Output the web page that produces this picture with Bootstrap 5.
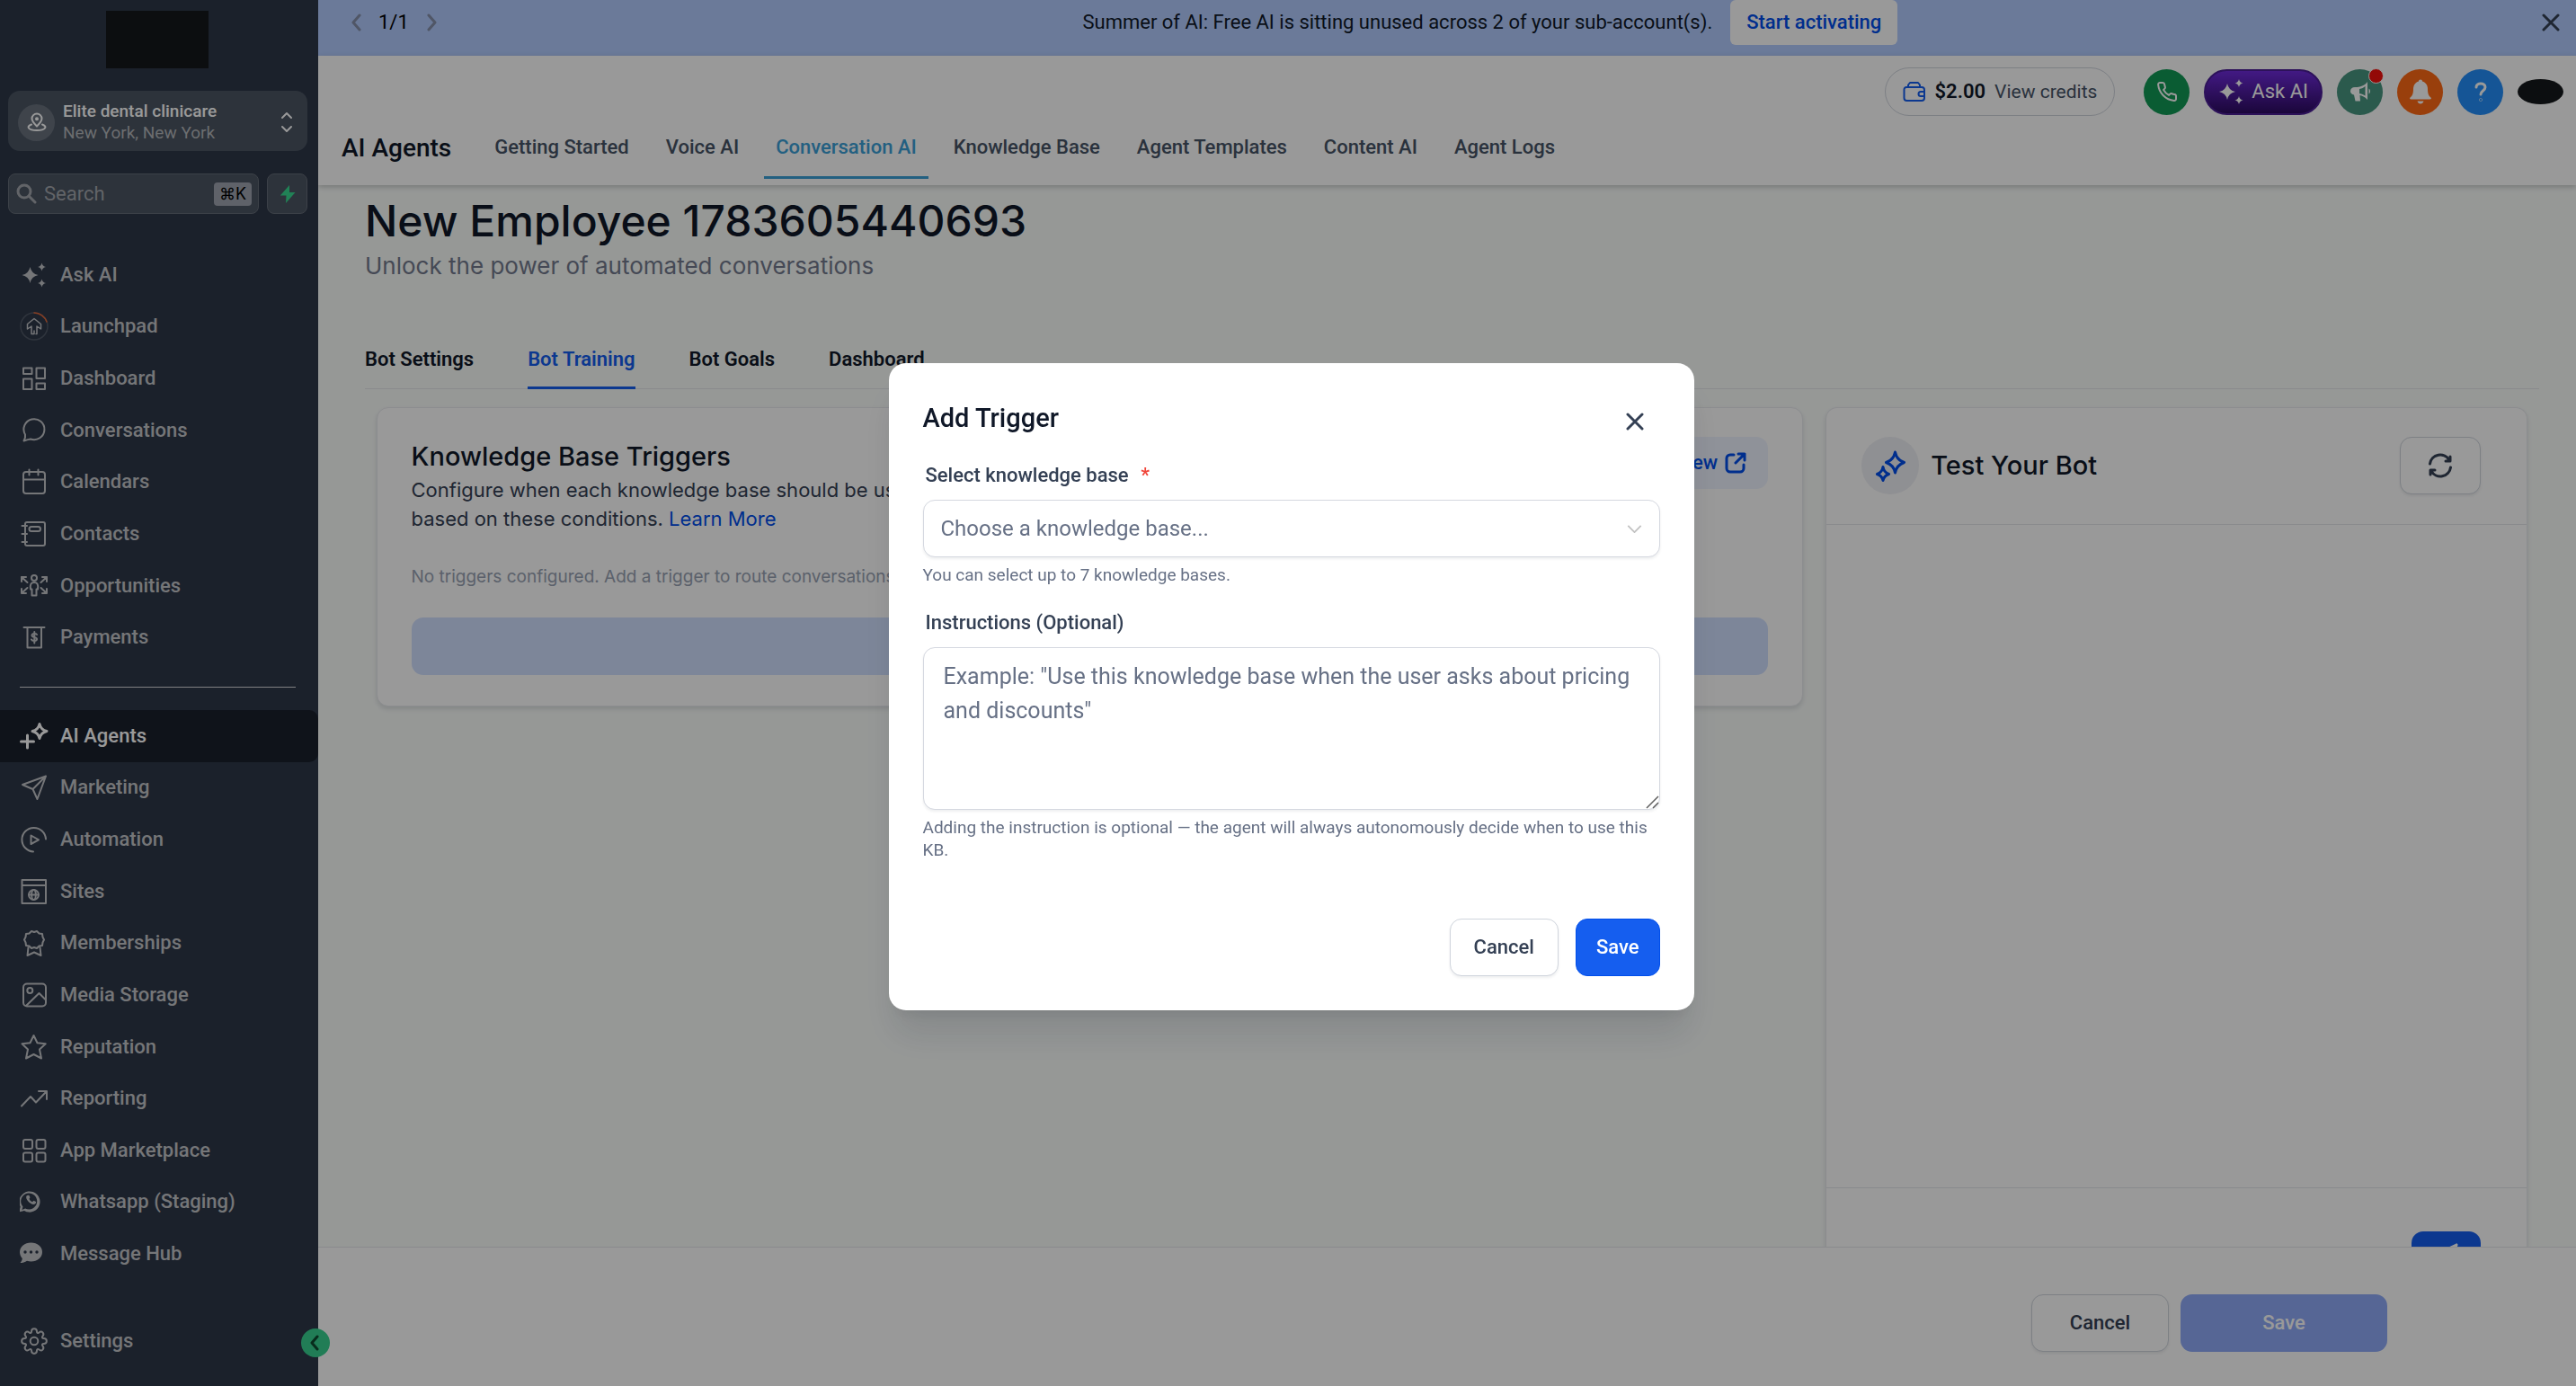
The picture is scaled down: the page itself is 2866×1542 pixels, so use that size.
<!DOCTYPE html>
<html lang="en">
<head>
<meta charset="utf-8">
<meta name="viewport" content="width=device-width, initial-scale=1">
<title>AI Agents – Conversation AI</title>
<link rel="stylesheet" href="https://cdn.jsdelivr.net/npm/bootstrap@5.3.0/dist/css/bootstrap.min.css">
<style>
  :root { --ink:#101828; --slate:#344054; --muted:#667085; --line:#d0d5dd; --blue:#155eef; --side:#2d3748; --side-text:#c3c5c9; }
  body { font-family: Roboto, "Liberation Sans", sans-serif; font-size: 22px; line-height: 32px; color: var(--ink); background: #fff; }
  .inter { font-family: Inter, Roboto, sans-serif; }
  .app-shell { height: 100vh; }
  svg { display: block; flex: none; }
  a { text-decoration: none; }
  .stroke { fill: none; stroke: currentColor; stroke-width: 2; stroke-linecap: round; stroke-linejoin: round; }
  .heavy { stroke-width: 3; }

  /* sidebar */
  .side { width: 354px; flex: none; background: var(--side); color: var(--side-text); }
  .brand-mark { width: 114px; height: 64px; background: #15181b; margin: 12px 0 25px 118px; }
  .acct { margin: 0 12px 25px 9px; height: 67px; padding: 3px 15px 0 11px; gap: 9px; border: 0; border-radius: 13px; background: #4b5563; color: #fff; text-align: left; font-size: 19px; line-height: 24px; }
  .acct-name { font-weight: 500; }
  .acct-pin { width: 41px; height: 41px; background: #69727e; }
  .acct-place { color: #b4b7bb; }
  .search-row { margin: 0 12px 39px 9px; gap: 9px; height: 45px; }
  .search-field { border: 1px solid #656d78; border-radius: 8px; background: #4b5563; padding: 0 7px 0 8px; gap: 8px; color: #a3a7ad; }
  .search-field input { background: none; border: 0; outline: 0; width: 100%; min-width: 0; padding: 0; color: #fff; }
  .search-field input::placeholder { color: #a3a7ad; }
  .kbd-hint { background: #9ea4af; color: #000; border-radius: 4px; padding: 0 6px; font: 18px/26px Inter, "DejaVu Sans", sans-serif; white-space: nowrap; }
  .bolt-btn { width: 45px; flex: none; border: 1px solid #656d78; border-radius: 8px; background: #4b5563; color: #38d88f; padding: 0; }
  .nav-top { flex: 8 1 0; }
  .nav-more { flex: 11 1 0; }
  .side-link { flex: 1 1 0; min-height: 0; padding-left: 22px; gap: 13px; color: var(--side-text); font-weight: 500; border-radius: 0 10px 10px 0; }
  .side-link.active { background: #1a202c; color: #fff; }
  .side-rule { height: 1px; margin: 26px 25px 25px 22px; background: #d5d7da; }
  .side-foot { height: 118px; padding: 39px 0 22px; }
  .fold-btn { position: absolute; right: -13px; bottom: 32px; width: 32px; height: 32px; border: 0; padding: 0; background: #38d090; color: #0e4a30; }

  /* banner and header */
  .promo { height: 62px; padding: 0 18px 12px 34px; background: #b2ccff; overflow: hidden; }
  .promo button { border: 0; background: none; padding: 0; }
  .promo .cta { background: #fff; color: #004eeb; font-weight: 500; height: 50px; padding: 0 18px; border-radius: 6px; margin-left: 20px; }
  .pager { color: #8590ab; gap: 17px; }
  .head { height: 144px; background: #fff; box-shadow: 0 2px 6px rgba(0,0,0,.22); position: relative; z-index: 1; }
  .head-tools { padding: 13px 14px 0 0; gap: 16px; }
  .credits { height: 54px; border: 1px solid var(--line); border-radius: 27px; padding: 0 19px 0 19px; gap: 10px; color: #475467; background: #fff; margin-right: 16px; font-size: 21px; }
  .credits b { font-weight: 600; color: var(--ink); font-size: 22px; }
  .round-btn { width: 51px; height: 51px; border: 0; padding: 0; color: #fff; position: relative; }
  .ask-btn { height: 51px; border: 2px solid #4b1e96; border-radius: 26px; background: linear-gradient(#6f2bdc, #2d0b62); color: #fff; padding: 0 14px; gap: 9px; }
  .red-dot { position: absolute; top: -1px; right: -1px; width: 17px; height: 17px; background: #f5100c; border: 1px solid #fff; }
  .me { width: 51px; height: 28px; border-radius: 50%; background: #15181b; }
  .head-nav { padding: 2px 0 0 26px; }
  .head-nav h1 { font-size: 28px; line-height: 40px; font-weight: 500; margin: 0 35px 0 0; }
  .top-tab { color: #475467; font-weight: 500; padding: 13px 13px 16px; margin-right: 15px; border-bottom: 3px solid transparent; }
  .top-tab.active { color: #3ba0d8; border-color: #3ba0d8; }

  /* page */
  .page { background: #fafdfb; padding: 12px 41px 0 52px; overflow: hidden; min-height: 0; }
  .page h2 { font-size: 48px; line-height: 56px; font-weight: 500; margin: 0; }
  .page .sub { font-size: 26px; line-height: 44px; color: #737b8e; margin: 0 0 49px; }
  .bot-tabs { border-bottom: 1px solid #e4e7ec; gap: 60px; margin-bottom: 20px; height: 66px; }
  .bot-tabs a { color: var(--ink); font-weight: 600; border-bottom: 3px solid transparent; padding-top: 17px; height: 66px; }
  .bot-tabs a.active { color: var(--blue); border-color: var(--blue); }
  .panels { --bs-gutter-x: 25px; margin: 0; min-height: 0; }
  .panel { background: #fff; border: 1px solid #e9ebef; border-radius: 13px; box-shadow: 0 3px 5px rgba(16,24,40,.12); }
  .panel h3 { font-size: 29px; line-height: 40px; font-weight: 500; margin: 0; }
  .kb { padding: 32px 38px 34px; }
  .kb h3 { line-height: 43px; }
  .kb p { margin: 0; color: var(--slate); }
  .kb a { color: #004eeb; }
  .kb .none-yet { font-size: 19px; line-height: 26px; color: #98a2b3; margin: 36px 0 32px; }
  .add-btn { height: 64px; border: 0; border-radius: 13px; background: #d1e0ff; color: #fff; font-weight: 500; }
  .preview-btn { height: 58px; border: 0; border-radius: 13px; background: #eff4ff; color: #004eeb; padding: 0 24px; gap: 8px; font-weight: 500; }
  .tester { border-bottom: 0; border-radius: 13px 13px 0 0; }
  .tester-head { height: 130px; padding: 0 51px 2px 39px; border-bottom: 1px solid #e4e7ec; }
  .orb { width: 64px; height: 64px; background: #eff0f5; color: #004eeb; margin-right: 13px; }
  .line-btn { height: 64px; border: 1px solid var(--line); border-radius: 13px; background: #fff; color: var(--slate); font-weight: 500; box-shadow: 0 2px 3px rgba(16,24,40,.07); }
  .refresh { width: 90px; padding: 0; }
  .tester-foot { height: 66px; border-top: 1px solid #e4e7ec; padding: 48px 51px 0; }
  .send { width: 77px; height: 64px; border: 0; border-radius: 13px; background: var(--blue); color: #fff; }
  .send svg { overflow: visible; }
  .actions { height: 155px; background: #fff; border-top: 1px solid #e4e7ec; padding: 52px 210px 0 0; gap: 13px; }
  .actions .line-btn { width: 153px; }
  .save-off { width: 230px; height: 64px; border: 0; border-radius: 13px; background: #8fabf8; color: #fff; font-weight: 500; }

  /* dialog */
  .modal-backdrop.show { opacity: .4; }
  .modal { padding: 0 0 14px 7px; }
  .modal-dialog { max-width: 896px; }
  .modal-content { border: 0; border-radius: 19px; padding: 38px; box-shadow: 0 32px 38px -6px rgba(16,24,40,.12), 0 12px 13px -6px rgba(16,24,40,.06); }
  .modal-title { font-size: 29px; line-height: 46px; font-weight: 500; }
  .x-btn { border: 0; background: none; padding: 0; width: 36px; height: 36px; margin: 9px 10px 0 0; color: var(--slate); }
  .field-label { font-weight: 500; color: var(--slate); margin: 0 0 10px 3px; line-height: 34px; display: block; }
  .pick, .note { border: 1px solid #d5d8e0; border-radius: 13px; color: var(--muted); box-shadow: 0 2px 3px rgba(16,24,40,.07); }
  .pick { height: 64px; font-size: 24px; padding: 0 60px 0 19px; background: #fff url("data:image/svg+xml,%3Csvg xmlns='http://www.w3.org/2000/svg' viewBox='0 0 18 10'%3E%3Cpath d='M1 1l8 8 8-8' fill='none' stroke='%23c2c2c2' stroke-width='2'/%3E%3C/svg%3E") no-repeat right 19px center / 17px 9px; }
  .note { height: 181px; font-size: 25px; padding: 13px 22px; line-height: 38px; }
  .note::placeholder { color: var(--muted); opacity: 1; }
  .note::-webkit-resizer { background: url("data:image/svg+xml,%3Csvg xmlns='http://www.w3.org/2000/svg' viewBox='0 0 15 15'%3E%3Cpath d='M1 14L14 1M8 14l6-6' stroke='%23606060' stroke-width='1.500'/%3E%3C/svg%3E") no-repeat right bottom / 15px 15px; }
  .hint { font-size: 19px; line-height: 25px; color: var(--muted); margin: 7px 0 0; }
  .modal-content .line-btn { padding: 0 26px; }
  .go-btn { height: 64px; padding: 0 22px; border: 1px solid #004eeb; border-radius: 13px; background: var(--blue); color: #fff; font-weight: 500; }
</style>
<script src="https://cdn.jsdelivr.net/npm/bootstrap@5.3.0/dist/js/bootstrap.bundle.min.js"></script>
</head>
<body class="modal-open overflow-hidden">
<div class="app-shell d-flex">

  <aside class="side d-flex flex-column position-relative">
    <div class="brand-mark"></div>
    <button type="button" class="acct d-flex align-items-center">
      <span class="acct-pin rounded-circle d-flex align-items-center justify-content-center"><svg class="stroke" width="22" height="22" viewBox="0 0 22 22"><path d="M11 15.5C8 12.500 5.500 10 5.500 7a5.500 5.500 0 0 1 11 0c0 3-2.500 5.500-5.500 8.500z"/><circle cx="11" cy="7.200" r="1"/><path d="M5 13.500c-6 2-4 6.500 6 6.500s12-4.500 6-6.500"/></svg></span>
      <span class="flex-fill"><span class="d-block acct-name">Elite dental clinicare</span><span class="d-block acct-place">New York, New York</span></span>
      <svg class="stroke" width="16" height="26" viewBox="0 0 16 26"><path d="M3 8l5-5 5 5M3 18l5 5 5-5"/></svg>
    </button>
    <div class="search-row d-flex">
      <label class="search-field d-flex align-items-center flex-fill">
        <svg class="stroke heavy" width="23" height="23" viewBox="0 0 23 23"><circle cx="9" cy="9" r="7"/><path d="M14.500 14.500l6.500 6.500"/></svg>
        <input type="text" placeholder="Search" aria-label="Search"><span class="kbd-hint">⌘K</span>
      </label>
      <button type="button" class="bolt-btn d-flex align-items-center justify-content-center" aria-label="Quick actions"><svg width="18" height="20" viewBox="0 0 18 20" fill="currentColor"><path d="M11 0L.800 11.500H7.500L7 20 17.500 8H11z"/></svg></button>
    </div>

    <nav class="nav-top d-flex flex-column">
      <a href="#" class="side-link d-flex align-items-center"><svg width="32" height="32" viewBox="0 0 32 32" fill="currentColor"><path d="M11.500 7q1.500 7.500 9 9-7.500 1.500-9 9-1.500-7.500-9-9 7.500-1.500 9-9zM24.500 2.500q.8 3.700 4.500 4.500-3.700.8-4.500 4.500-.8-3.700-4.500-4.500 3.700-.8 4.500-4.500zM24.500 20.500q.8 3.700 4.500 4.500-3.700.8-4.500 4.500-.8-3.700-4.500-4.500 3.700-.8 4.500-4.500z"/></svg>Ask AI</a>
      <a href="#" class="side-link d-flex align-items-center"><svg class="stroke" width="32" height="32" viewBox="0 0 32 32"><g stroke-width="1.500"><circle cx="16" cy="16" r="15" stroke="#4f5866"/><path d="M16 1a15 15 0 0 1 14 10" stroke="#e0683a"/><path d="M13 24.500V16l-4.500 3v-5.500L16 7.500l7.500 6V19L19 16v8.500h-1M13 24.500h3V21"/></g></svg>Launchpad</a>
      <a href="#" class="side-link d-flex align-items-center"><svg class="stroke" width="32" height="32" viewBox="0 0 32 32"><path d="M4 4.500h9.500V11H4zM4 16.500h9.500V28H4zM18.500 4.500H28V16h-9.500zM18.500 21.500H28V28h-9.500z"/></svg>Dashboard</a>
      <a href="#" class="side-link d-flex align-items-center"><svg class="stroke" width="32" height="32" viewBox="0 0 32 32"><path d="M4.500 27.500c1.500-3 2-4.800 1.500-7A11.500 11.500 0 1 1 12 25.500c-2 .2-4 .8-7.500 2z"/></svg>Conversations</a>
      <a href="#" class="side-link d-flex align-items-center"><svg class="stroke" width="32" height="32" viewBox="0 0 32 32"><rect x="4" y="5" width="24" height="24" rx="3"/><path d="M4 13.500h24M10.500 2.500v6M20.500 2.500v6"/></svg>Calendars</a>
      <a href="#" class="side-link d-flex align-items-center"><svg class="stroke" width="32" height="32" viewBox="0 0 32 32"><rect x="6" y="3" width="22" height="26" rx="2"/><path d="M2.500 7h5.500M2.500 16h5.500M2.500 25h5.500"/><rect x="10.500" y="8" width="12.500" height="5" rx="2.500"/></svg>Contacts</a>
      <a href="#" class="side-link d-flex align-items-center"><svg class="stroke" width="32" height="32" viewBox="0 0 32 32"><circle cx="16" cy="7" r="3"/><path d="M13.500 26.500v-7H12c-1-6 1-7.500 4-7.500s5 1.500 4 7.500h-1.500v7z"/><path d="M2 11V6h5M2 6l6.500 6M30 11V6h-5M30 6l-6.500 6M2 19v5h5M2 24l6.500-6M30 19v5h-5M30 24l-6.500-6"/></svg>Opportunities</a>
      <a href="#" class="side-link d-flex align-items-center"><svg class="stroke" width="32" height="32" viewBox="0 0 32 32"><path d="M4.500 5h23M8.500 5v22.500h15.500V5M19 13c-1-1.500-5.500-1.500-5.500 1s5.500 1.500 5.500 4-5 2.500-6 .500M16.300 10v12.500"/></svg>Payments</a>
    </nav>
    <div class="side-rule"></div>
    <nav class="nav-more d-flex flex-column">
      <a href="#" class="side-link active d-flex align-items-center"><svg class="stroke heavy" width="32" height="32" viewBox="0 0 32 32"><path d="M22 2.500q1.500 6.500 8 8-6.500 1.500-8 8-1.500-6.500-8-8 6.500-1.500 8-8zM8.500 15v14M1.500 22h14"/></svg>AI Agents</a>
      <a href="#" class="side-link d-flex align-items-center"><svg class="stroke" width="32" height="32" viewBox="0 0 32 32"><path d="M29 3.500L3 13l11.500 5L19.500 29zM29 3.500L14.500 18"/></svg>Marketing</a>
      <a href="#" class="side-link d-flex align-items-center"><svg class="stroke" width="32" height="32" viewBox="0 0 32 32"><path d="M29 15.500A13.300 13.300 0 1 0 15 29.500M12.500 11.500l8.500 4.800-8.500 4.700z"/></svg>Automation</a>
      <a href="#" class="side-link d-flex align-items-center"><svg class="stroke" width="32" height="32" viewBox="0 0 32 32"><path d="M2.500 3h26.500v26H2.500zM2.500 9h26.500"/><circle cx="15.500" cy="19.500" r="5.500"/><ellipse cx="15.500" cy="19.500" rx="2.300" ry="5.500"/><path d="M10 19.500h11"/></svg>Sites</a>
      <a href="#" class="side-link d-flex align-items-center"><svg class="stroke" width="32" height="32" viewBox="0 0 32 32"><path d="M13 3l3 1 3-1 2.500 2.500 3.500.500.500 3.500 1.500 3-1.500 3-.500 3.500-3.500.500L19 22l-3-1-3 1-2.500-2.500L7 19l-.5-3.500L5 12.500l1.500-3L7 6l3.500-.500zM9.500 21L8.500 30l7.500-3.500L23.500 30l-1-9"/></svg>Memberships</a>
      <a href="#" class="side-link d-flex align-items-center"><svg class="stroke" width="32" height="32" viewBox="0 0 32 32"><rect x="4" y="3.500" width="25" height="25" rx="4"/><circle cx="11.300" cy="11" r="3"/><path d="M7 28L21.500 14 29 21.500"/></svg>Media Storage</a>
      <a href="#" class="side-link d-flex align-items-center"><svg class="stroke" width="32" height="32" viewBox="0 0 32 32"><path d="M15.500 3l4 8.300 9.200 1-6.700 6.200L24 28.500l-8.500-4.500L7 28.500l2-10L2.500 12.300l9-1z"/></svg>Reputation</a>
      <a href="#" class="side-link d-flex align-items-center"><svg class="stroke" width="32" height="32" viewBox="0 0 32 32"><path d="M2 24.500l10-10.500 6 6.500L29.500 8.500M21 8h9v9"/></svg>Reporting</a>
      <a href="#" class="side-link d-flex align-items-center"><svg class="stroke" width="32" height="32" viewBox="0 0 32 32"><rect x="4" y="4" width="10" height="10" rx="2"/><rect x="18.500" y="4" width="10" height="10" rx="2"/><rect x="4" y="18.500" width="10" height="10" rx="2"/><rect x="18.500" y="18.500" width="10" height="10" rx="2"/></svg>App Marketplace</a>
      <a href="#" class="side-link d-flex align-items-center"><svg width="32" height="32" viewBox="0 0 32 32"><path fill="currentColor" fill-rule="evenodd" d="M-1 27.500l1.700-6A11.600 11.600 0 1 1 5 26zM10.500 24.500a9 9 0 1 0-7-3l-1 3.500 3.600-1.500a9 9 0 0 0 4.400 1z"/><path d="M7.500 9.500c-2 3 4.500 10.500 9 9.300 1.700-.8 1.700-2.300 1.500-2.800l-2.500-1.200-1.500 1.400c-2-.8-3-2-3.500-3.500l1-1.500-1.200-2.400c-1.300-.3-2.200 0-2.800.7z" fill="currentColor"/></svg>Whatsapp (Staging)</a>
      <a href="#" class="side-link d-flex align-items-center"><svg width="32" height="32" viewBox="0 0 32 32"><path d="M12.500 3.500c7 0 12.500 4.500 12.500 10.500s-5.500 10.500-12.500 10.500c-1.500 0-3-.3-4.500-.8-2 1.600-5 2.300-7.500 2.300 1.500-1.500 2.300-3.500 2.300-5C1 19 0 16.500 0 14 0 8 5.500 3.500 12.500 3.500z" fill="currentColor"/><g fill="#2d3748"><circle cx="6" cy="14" r="1.700"/><circle cx="12.500" cy="14" r="1.700"/><circle cx="19" cy="14" r="1.700"/></g></svg>Message Hub</a>
    </nav>
    <div class="side-foot d-flex flex-column">
      <a href="#" class="side-link d-flex align-items-center"><svg class="stroke" width="32" height="32" viewBox="0 0 32 32"><path d="M13 5.500C13 1 19 1 19 5.500c0 1.500 1 2 2.200 1.200C24.500 3.800 28 7.500 25.300 10.800c-.8 1.200-.3 2.200 1.200 2.200 4.500 0 4.500 6 0 6-1.500 0-2 1-1.200 2.200 2.700 3.300-.8 7-4.100 4.100C20 24.500 19 25 19 26.500c0 4.500-6 4.500-6 0 0-1.500-1-2-2.200-1.200-3.300 2.900-6.800-.8-4.100-4.100C7.500 20 7 19 5.500 19 1 19 1 13 5.500 13 7 13 7.500 12 6.700 10.800 4 7.500 7.500 3.800 10.800 6.700 12 7.500 13 7 13 5.500z"/><circle cx="16" cy="16" r="4.300"/></svg>Settings</a>
    </div>
    <button type="button" class="fold-btn rounded-circle d-flex align-items-center justify-content-center" aria-label="Collapse sidebar"><svg class="stroke heavy" width="12" height="18" viewBox="0 0 12 18"><path d="M8 2L2 9l6 7"/></svg></button>
  </aside>

  <div class="d-flex flex-column flex-fill overflow-hidden">
    <div class="promo d-flex align-items-center justify-content-between flex-shrink-0">
      <div class="pager d-flex align-items-center">
        <button type="button" class="text-reset" aria-label="Previous"><svg class="stroke heavy" width="16" height="20" viewBox="0 0 16 20"><path d="M12 2L5 10l7 8"/></svg></button>
        <span class="text-black">1/1</span>
        <button type="button" class="text-reset" aria-label="Next"><svg class="stroke heavy" width="16" height="20" viewBox="0 0 16 20"><path d="M5 2l7 8-7 8"/></svg></button>
      </div>
      <div class="d-flex align-items-center"><span>Summer of AI: Free AI is sitting unused across 2 of your sub-account(s).</span><button type="button" class="cta">Start activating</button></div>
      <button type="button" aria-label="Dismiss"><svg class="stroke heavy" width="20" height="20" viewBox="0 0 20 20"><path d="M2 2l16 16M18 2L2 18" stroke="#344054"/></svg></button>
    </div>

    <header class="head flex-shrink-0">
      <div class="head-tools d-flex align-items-center justify-content-end">
        <button type="button" class="credits d-flex align-items-center">
          <svg class="stroke" width="26" height="24" viewBox="0 0 26 24"><path stroke="#155eef" d="M6 7V4.500L8 2h9l2 2.500V7M4 7h17a3 3 0 0 1 3 3v9a3 3 0 0 1-3 3H4.500A3 3 0 0 1 1.500 19V9.500A2.500 2.500 0 0 1 4 7zM24 12h-4a2.500 2.500 0 0 0 0 5h4"/></svg>
          <b>$2.00</b><span>View credits</span></button>
        <button type="button" class="round-btn rounded-circle d-flex align-items-center justify-content-center" style="background:#119955" aria-label="Call"><svg class="stroke" width="24" height="24" viewBox="0 0 24 24"><path d="M22 16.920v3a2 2 0 0 1-2.180 2A19.800 19.800 0 0 1 2.120 4.180 2 2 0 0 1 4.110 2h3a2 2 0 0 1 2 1.720c.13.960.36 1.900.700 2.810a2 2 0 0 1-.450 2.110L8.090 9.910a16 16 0 0 0 6 6l1.270-1.270a2 2 0 0 1 2.110-.450c.910.340 1.850.570 2.810.700A2 2 0 0 1 22 16.920z"/></svg></button>
        <button type="button" class="ask-btn d-flex align-items-center"><svg width="28" height="28" viewBox="0 0 28 28" fill="currentColor"><path d="M10 5q1.500 7.500 9 9-7.500 1.500-9 9-1.500-7.500-9-9 7.500-1.500 9-9zM23 0q.8 3.700 4.500 4.500Q23.800 5.300 23 9q-.8-3.700-4.500-4.500Q22.200 3.700 23 0zM23 19q.8 3.700 4.500 4.500-3.700.8-4.500 4.500-.8-3.700-4.500-4.500 3.700-.8 4.500-4.500z"/></svg>Ask AI</button>
        <button type="button" class="round-btn rounded-circle d-flex align-items-center justify-content-center" style="background:#489680" aria-label="Announcements"><svg width="24" height="24" viewBox="0 0 24 24"><path fill="currentColor" d="M20 1v20c-3-3.500-6-4.500-8.500-5l.5 6.500H6.500L5 15.500C2.500 15 1 13.500 1 11.500 1 8.500 3 7 6 7c6 0 11-2 14-6zM21.500 8.500c2 1 2 5 0 6z"/><path d="M11 9v5c3 .6 4.500 1.500 6.500 2.500V6c-2 1.600-3.500 2.500-6.500 3z" fill="#489680"/></svg><span class="red-dot rounded-circle"></span></button>
        <button type="button" class="round-btn rounded-circle d-flex align-items-center justify-content-center" style="background:#ff6914" aria-label="Notifications"><svg width="26" height="28" viewBox="0 0 26 28" fill="currentColor"><path d="M13 .500c1.300 0 2 .800 2 2 4 1.200 6 4.500 6 8.500 0 5 1 7.500 3.500 9.500.8 1 .3 2-1 2h-21c-1.300 0-1.800-1-1-2C4 18.500 5 16 5 11c0-4 2-7.300 6-8.500 0-1.200.7-2 2-2zM9.500 24.500h7c-.5 2-2 3-3.500 3s-3-1-3.500-3z"/></svg></button>
        <button type="button" class="round-btn rounded-circle d-flex align-items-center justify-content-center" style="background:#238efa" aria-label="Help"><svg class="stroke heavy" width="16" height="22" viewBox="0 0 16 22"><path d="M3 6c0-5.500 10-5.500 10 0 0 4-5 4-5 8"/><circle cx="8" cy="20" r=".300"/></svg></button>
        <div class="me"></div>
      </div>
      <div class="head-nav d-flex align-items-center">
        <h1>AI Agents</h1>
        <nav class="d-flex pt-1">
          <a href="#" class="top-tab">Getting Started</a><a href="#" class="top-tab">Voice AI</a><a href="#" class="top-tab active">Conversation AI</a><a href="#" class="top-tab">Knowledge Base</a><a href="#" class="top-tab">Agent Templates</a><a href="#" class="top-tab">Content AI</a><a href="#" class="top-tab">Agent Logs</a>
        </nav>
      </div>
    </header>

    <main class="page flex-fill d-flex flex-column">
      <h2 class="inter">New Employee 1783605440693</h2>
      <p class="sub inter">Unlock the power of automated conversations</p>
      <nav class="bot-tabs d-flex flex-shrink-0">
        <a href="#">Bot Settings</a><a href="#" class="active">Bot Training</a><a href="#">Bot Goals</a><a href="#">Dashboard</a>
      </nav>
      <div class="row panels flex-fill">
        <div class="col-8">
          <section class="panel kb">
            <div class="d-flex justify-content-between align-items-start">
              <div class="inter">
                <h3>Knowledge Base Triggers</h3>
                <p>Configure when each knowledge base should be used<br>based on these conditions. <a href="#">Learn More</a></p>
              </div>
              <button type="button" class="preview-btn d-flex align-items-center">Preview<svg class="stroke heavy" width="24" height="24" viewBox="0 0 24 24"><path d="M10 3H6a4 4 0 0 0-4 4v11a4 4 0 0 0 4 4h11a4 4 0 0 0 4-4v-4M15 2h7v7M22 2L12 12"/></svg></button>
            </div>
            <p class="none-yet inter">No triggers configured. Add a trigger to route conversations</p>
            <button type="button" class="add-btn w-100 d-block">Add Trigger</button>
          </section>
        </div>
        <div class="col-4 h-100">
          <section class="panel tester h-100 d-flex flex-column">
            <div class="tester-head d-flex align-items-center flex-shrink-0">
              <span class="orb rounded-circle d-flex align-items-center justify-content-center"><svg class="stroke heavy" width="36" height="36" viewBox="0 0 36 36"><path d="M23.500 3q1.500 8.500 10 11.500-8.500 3-10 11.500-1.500-8.500-10-11.500 8.500-3 10-11.500zM10 19.500q1 6 6.500 8-5.500 2-6.500 7-1-5-6.500-7 5.500-2 6.500-8z"/></svg></span>
              <h3 class="inter flex-fill">Test Your Bot</h3>
              <button type="button" class="line-btn refresh d-flex align-items-center justify-content-center" aria-label="Restart chat"><svg class="stroke heavy" width="28" height="28" viewBox="0 0 28 28"><path d="M2.500 12A11.500 11.500 0 0 1 24 8M25 4v5h-5M25.500 16A11.500 11.500 0 0 1 4 20M3 24v-5h5"/></svg></button>
            </div>
            <div class="flex-fill"></div>
            <div class="tester-foot d-flex justify-content-end flex-shrink-0">
              <button type="button" class="send d-flex align-items-center justify-content-center flex-shrink-0" aria-label="Send"><svg class="stroke heavy" width="34" height="34" viewBox="0 0 34 34"><path d="M28 0L3 12l11 5 5 12zM28 0L14 17"/></svg></button>
            </div>
          </section>
        </div>
      </div>
    </main>

    <footer class="actions d-flex justify-content-end flex-shrink-0">
      <button type="button" class="line-btn">Cancel</button>
      <button type="button" class="save-off">Save</button>
    </footer>
  </div>
</div>

<div class="modal-backdrop show"></div>
<div class="modal show d-block" role="dialog" aria-modal="true" aria-labelledby="dlgTitle">
  <div class="modal-dialog modal-dialog-centered">
    <form class="modal-content">
      <div class="d-flex justify-content-between align-items-start mb-4">
        <h2 class="modal-title" id="dlgTitle">Add Trigger</h2>
        <button type="button" class="x-btn d-flex align-items-center justify-content-center" aria-label="Close"><svg class="stroke heavy" width="20" height="20" viewBox="0 0 20 20"><path d="M2 2l16 16M18 2L2 18"/></svg></button>
      </div>
      <label class="field-label" for="kbPick">Select knowledge base <span class="ms-2" style="color:#f04438">*</span></label>
      <select id="kbPick" class="form-select pick"><option>Choose a knowledge base...</option></select>
      <p class="hint mb-4">You can select up to 7 knowledge bases.</p>
      <label class="field-label" for="kbNote">Instructions (Optional)</label>
      <textarea id="kbNote" class="form-control note" placeholder='Example: "Use this knowledge base when the user asks about pricing and discounts"'></textarea>
      <p class="hint">Adding the instruction is optional — the agent will always autonomously decide when to use this KB.</p>
      <div class="d-flex justify-content-end mt-5 pt-3" style="gap:19px">
        <button type="button" class="line-btn">Cancel</button>
        <button type="submit" class="go-btn">Save</button>
      </div>
    </form>
  </div>
</div>
</body>
</html>
